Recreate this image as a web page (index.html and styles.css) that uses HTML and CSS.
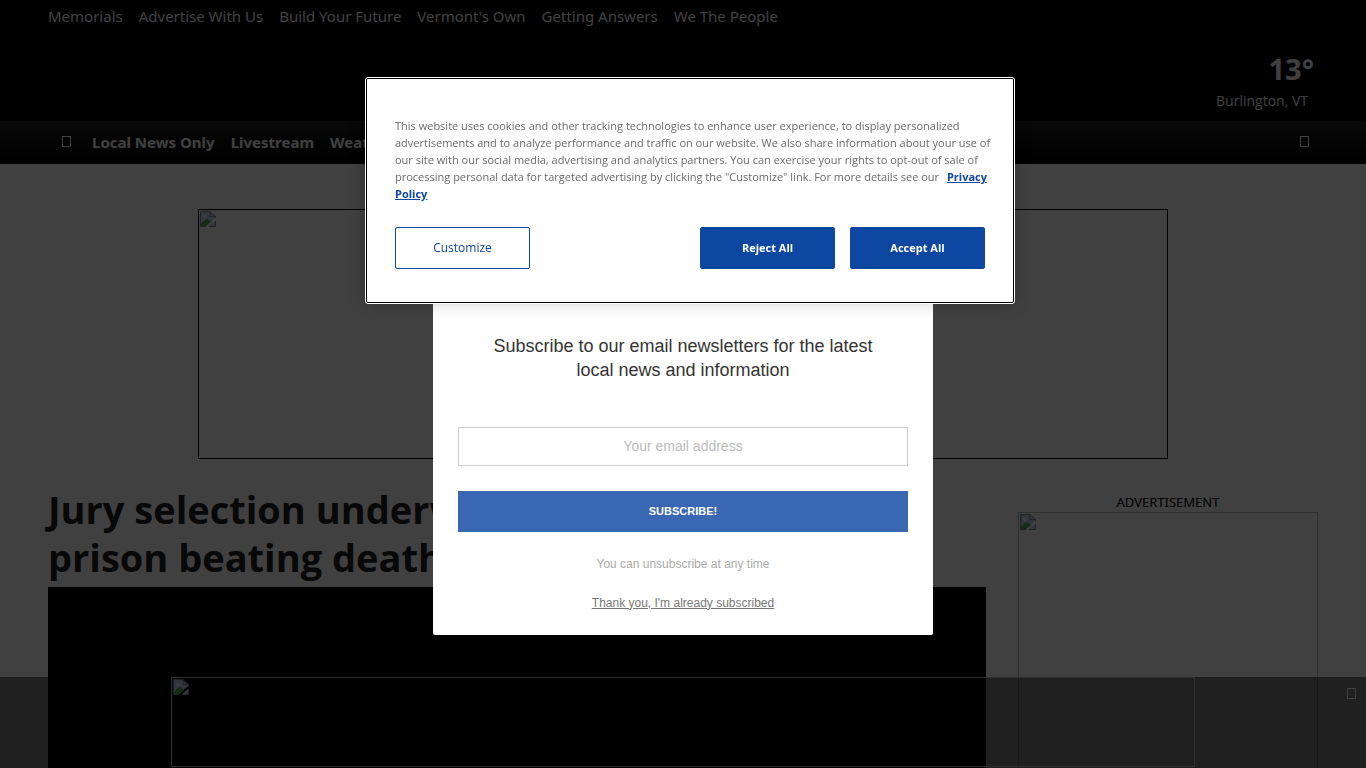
FILE: index.html
```html
<!DOCTYPE html>
<html lang="en">
<head>
    <meta charset="UTF-8">
    <meta name="viewport" content="width=device-width, initial-scale=1.0">
    <title>Local News</title>
    <link rel="stylesheet" href="styles.css">
</head>
<body>
    <svg class="symbols" aria-hidden="true">
        <symbol id="broken" viewBox="0 0 16 16">
            <path d="M1 1h9l5 5v1L6 15H1z" fill="#c3d3f3"/>
            <path d="M1 13l4-4 3-1 3 3-5 4H1z" fill="#4caf50"/>
            <path d="M3 5.500a1.500 1.500 0 0 1 3-.5 1 1 0 0 1 1 1.500H3z" fill="#fff"/>
            <path d="M15 10v5H9z" fill="#c3d3f3"/>
            <path d="M.5 15.500V.5H10l5.500 5V7M10 .5v5h5.500M.5 15.500H6M9 15.500h6.500V10" fill="none" stroke="#8a8a8a"/>
        </symbol>
    </svg>

    <header class="header">
        <nav class="top-links">
            <a href="#">Memorials</a>
            <a href="#">Advertise With Us</a>
            <a href="#">Build Your Future</a>
            <a href="#">Vermont's Own</a>
            <a href="#">Getting Answers</a>
            <a href="#">We The People</a>
        </nav>
        <div class="weather">
            <span class="temp">13°</span>
            <span class="city">Burlington, VT</span>
        </div>
    </header>

    <nav class="main-nav">
        <a class="icon-link" href="#" aria-label="Home"><span class="glyph"></span></a>
        <a href="#">Local News Only</a>
        <a href="#">Livestream</a>
        <a href="#">Weather</a>
        <button class="search" aria-label="Search"><span class="glyph"></span></button>
    </nav>

    <div class="top-ad">
        <svg class="broken"><use href="#broken"/></svg>
    </div>

    <main class="content">
        <article class="story">
            <h1>Jury selection underway<br>prison beating death</h1>
            <div class="video"></div>
        </article>
        <aside class="sidebar">
            <p>ADVERTISEMENT</p>
            <div class="side-ad">
                <svg class="broken"><use href="#broken"/></svg>
            </div>
        </aside>
    </main>

    <div class="bottom-bar">
        <div class="bottom-ad">
            <svg class="broken"><use href="#broken"/></svg>
        </div>
        <button class="bottom-close" aria-label="Close ad"><span class="glyph"></span></button>
    </div>

    <div class="overlay">
        <form class="newsletter">
            <h2>Subscribe to our email newsletters for the latest local news and information</h2>
            <input type="email" placeholder="Your email address" aria-label="Your email address">
            <button type="submit">SUBSCRIBE!</button>
            <p>You can unsubscribe at any time</p>
            <a href="#">Thank you, I'm already subscribed</a>
        </form>
    </div>

    <div class="cookies" role="dialog" aria-label="Cookies">
        <p>This website uses cookies and other tracking technologies to enhance user experience, to display personalized advertisements and to analyze performance and traffic on our website. We also share information about your use of our site with our social media, advertising and analytics partners. You can exercise your rights to opt-out of sale of processing personal data for targeted advertising by clicking the "Customize" link. For more details see our <a href="#">Privacy Policy</a></p>
        <div class="cookie-buttons">
            <button class="customize">Customize</button>
            <button>Reject All</button>
            <button>Accept All</button>
        </div>
    </div>
</body>
</html>
```

FILE: styles.css
```css
* {
    box-sizing: border-box;
}

body {
    display: flex;
    flex-direction: column;
    margin: 0;
    height: 100vh;
    overflow: hidden;
    font-family: "Noto Sans", sans-serif;
    font-size: 16px;
    color: #222;
    background: #fff;
}

a {
    color: inherit;
    text-decoration: none;
}

button {
    font-family: inherit;
    border: none;
    cursor: pointer;
}

.symbols {
    display: none;
}

.broken {
    display: block;
    width: 16px;
    height: 16px;
}

/* box used for missing icon glyphs */
.glyph {
    display: block;
    width: 9px;
    height: 11px;
    border: 1px solid #fff;
}

.header {
    display: flex;
    flex-direction: column;
    justify-content: space-between;
    height: 121px;
    padding: 4px 48px 8px;
    background: #000;
    color: #fff;
}

.top-links {
    display: flex;
    gap: 16px;
    font-size: 15px;
    line-height: 24px;
}

.weather {
    display: flex;
    flex-direction: column;
    align-items: flex-end;
}

.temp {
    padding-right: 4px;
    font-size: 29px;
    font-weight: 700;
    line-height: 40px;
}

.city {
    padding-right: 10px;
    font-family: "Open Sans", sans-serif;
    font-size: 14px;
    line-height: 24px;
}

.main-nav {
    display: flex;
    align-items: center;
    gap: 16px;
    height: 43px;
    padding: 0 57px 2px;
    background: linear-gradient(#222, #000);
    color: #fff;
    font-size: 15px;
    font-weight: 700;
}

.icon-link {
    padding: 0 5px;
}

.search {
    margin-left: auto;
    padding: 0;
    background: none;
}

.top-ad {
    width: 100%;
    max-width: 970px;
    height: 250px;
    margin: 45px auto 26px;
    padding: 1px;
    border: 1px solid #000;
}

.content {
    display: flex;
    flex: 1;
    gap: 32px;
    padding: 0 48px;
}

.story {
    display: flex;
    flex-direction: column;
    flex: 1;
}

.story h1 {
    margin: 0 0 6px;
    font-family: "Open Sans", sans-serif;
    font-size: 38px;
    line-height: 48px;
}

.video {
    flex: 1;
    background: #000;
}

.sidebar {
    display: flex;
    flex-direction: column;
    width: 300px;
}

.sidebar p {
    margin: 7px 0 0;
    font-size: 13px;
    line-height: 20px;
    text-align: center;
    color: #000;
}

.side-ad {
    flex: 1;
    padding: 1px;
    border: 1px solid #c0c0c0;
    border-bottom: none;
}

.bottom-bar {
    position: fixed;
    left: 0;
    right: 0;
    bottom: 0;
    height: 91px;
    background: rgba(0, 0, 0, 0.5);
}

.bottom-ad {
    max-width: 1024px;
    height: 90px;
    margin: 0 auto;
    padding: 1px;
    border: 1px solid #c0c0c0;
}

.bottom-close {
    position: absolute;
    top: 11px;
    right: 10px;
    padding: 0;
    background: none;
}

.overlay {
    position: fixed;
    inset: 0;
    display: flex;
    align-items: center;
    justify-content: center;
    background: rgba(0, 0, 0, 0.75);
}

.newsletter {
    display: flex;
    flex-direction: column;
    align-items: center;
    width: 500px;
    padding: 200px 25px 24px;
    border-radius: 2px;
    background: #fff;
    font-family: "Liberation Sans", Arial, sans-serif;
    font-size: 12px;
    text-align: center;
}

.newsletter h2 {
    width: 400px;
    margin: 0 0 45px;
    font-size: 18px;
    font-weight: 400;
    line-height: 24px;
    color: #333;
}

.newsletter input {
    width: 100%;
    height: 39px;
    margin-bottom: 25px;
    border: 1px solid #ccc;
    font-family: inherit;
    font-size: 14px;
    text-align: center;
}

.newsletter input::placeholder {
    color: #bbb;
}

.newsletter button {
    width: 100%;
    height: 41px;
    background: #3a67b1;
    color: #fff;
    font-size: 11px;
    font-weight: 700;
}

.newsletter p {
    margin: 24px 0 23px;
    line-height: 16px;
    color: #aaa;
}

.newsletter a {
    line-height: 16px;
    color: #777;
    text-decoration: underline;
}

.cookies {
    position: fixed;
    top: 78px;
    left: calc(50% - 317px);
    width: 648px;
    padding: 38px 18px 33px 28px;
    border: 1px solid #000;
    outline: 1px solid #fff;
    border-radius: 2px;
    background: #fff;
    box-shadow: 0 0 18px rgba(0, 0, 0, 0.2);
    font-family: "Open Sans", sans-serif;
    font-size: 11px;
    color: #696969;
}

.cookies p {
    margin: 0 0 25px;
    line-height: 17px;
}

.cookies a {
    margin-left: 5px;
    font-weight: 700;
    color: #0d47a1;
    text-decoration: underline;
}

.cookie-buttons {
    display: flex;
    gap: 15px;
    padding-right: 10px;
}

.cookie-buttons button {
    width: 135px;
    height: 42px;
    padding-bottom: 2px;
    border: 1px solid #0d47a1;
    border-radius: 2px;
    background: #0d47a1;
    color: #fff;
    font-size: 11px;
    font-weight: 700;
}

.cookie-buttons .customize {
    margin-right: auto;
    background: #fff;
    color: #0d47a1;
    font-size: 12px;
    font-weight: 400;
}
```
